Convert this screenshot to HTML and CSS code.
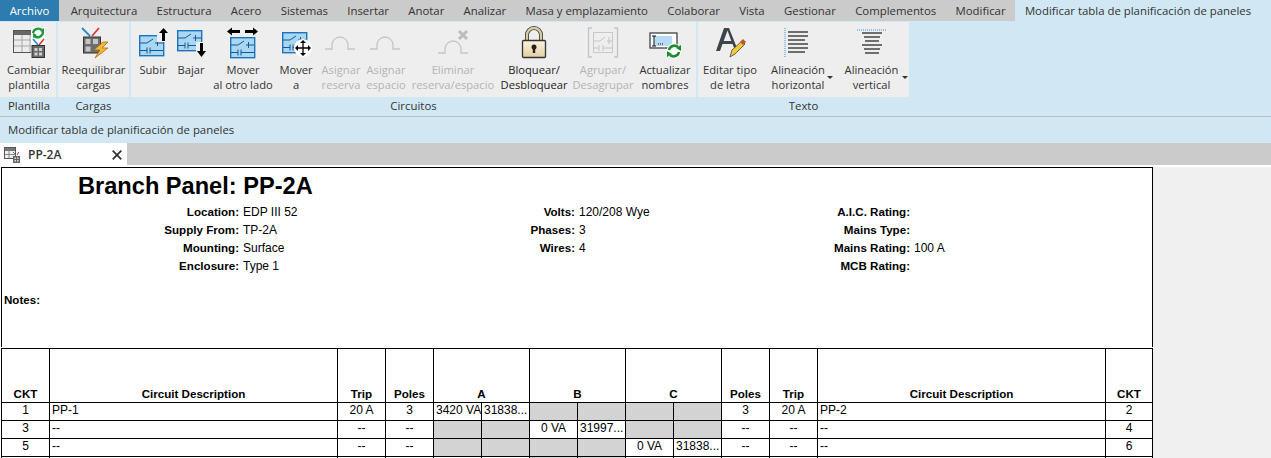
FILE: index.html
```html
<!DOCTYPE html>
<html lang="es">
<head>
<meta charset="utf-8">
<title>Modificar tabla de planificación de paneles</title>
<link rel="stylesheet" href="styles.css">
</head>
<body>
<nav class="tabs">
  <span class="tab file">Archivo</span>
  <span class="tab">Arquitectura</span>
  <span class="tab">Estructura</span>
  <span class="tab">Acero</span>
  <span class="tab">Sistemas</span>
  <span class="tab">Insertar</span>
  <span class="tab">Anotar</span>
  <span class="tab">Analizar</span>
  <span class="tab">Masa y emplazamiento</span>
  <span class="tab">Colaborar</span>
  <span class="tab">Vista</span>
  <span class="tab">Gestionar</span>
  <span class="tab">Complementos</span>
  <span class="tab">Modificar</span>
  <span class="tab active">Modificar tabla de planificación de paneles</span>
</nav>

<svg class="defs" width="0" height="0" aria-hidden="true">
  <defs>
    <linearGradient id="brass" x1="0" y1="0" x2="0" y2="1">
      <stop offset="0" stop-color="#fbf3df"/>
      <stop offset="1" stop-color="#e3cfa2"/>
    </linearGradient>
    <g id="circ">
      <rect x=".7" y=".7" width="24" height="20" fill="#a9d6f3" stroke="#1c75bc" stroke-width="1.400"/>
      <path d="M1 8h7l6-4M16 8h8M18.500 5v6M1 15.500h7M8 12.500v6M11 12.500v6M11 15.500h13" stroke="#14588f" stroke-width="1" fill="none"/>
    </g>
    <g id="sw">
      <path d="M0 22h7v-4a8 8 0 0 1 16 0v4h7" fill="none" stroke="#c6c6c6" stroke-width="1.300"/>
    </g>
  </defs>
</svg>

<section class="ribbon">
  <div class="panel p-plantilla">
    <div class="tools">
      <div class="tool t-54">
        <svg class="icon" viewBox="0 0 32 32"><rect x=".5" y="3.500" width="26" height="22" fill="#ececec" stroke="#555"/><path d="M1 4h25v4H1z" fill="#666"/><path d="M1 13h25M1 19h25M9 8v17M17 8v17" stroke="#a8a8a8"/><path d="M18 0h14v31H18z" fill="#fff"/><path d="M20 6a5.500 5.500 0 0 1 9-3M30 5a5.500 5.500 0 0 1-9 4" fill="none" stroke="#1f9a3a" stroke-width="2.400"/><path d="M27 4l4-3v5zM24 8l-4 3V6z" fill="#1f9a3a"/><path d="M20 12l5 6" stroke="#2a8ac8" stroke-width="1.600"/><path d="M31 12l-5 6" stroke="#d33" stroke-width="1.600"/><rect x="19" y="18.500" width="12.500" height="12" fill="#6a6a6a" stroke="#333"/><path d="M21.500 21h3v3h-3zM26 21h3v3h-3zM21.500 25.500h3v3h-3zM26 25.500h3v3h-3z" fill="#d0d0d0"/></svg>
        <span>Cambiar<br>plantilla</span>
      </div>
    </div>
    <div class="label pad-l">Plantilla</div>
  </div>
  <div class="panel p-cargas">
    <div class="tools">
      <div class="tool t-71">
        <svg class="icon" viewBox="0 0 32 32"><path d="M4 1l8 8" stroke="#2a8ac8" stroke-width="1.800"/><path d="M21 1l-7 8" stroke="#d43c3c" stroke-width="1.800"/><rect x="5.500" y="10" width="17" height="16" fill="#6d6d6d" stroke="#333"/><path d="M7.500 12h5v5h-5zM15 12h5v5h-5zM7.500 19.500h5v5h-5z" fill="#c6c6c6"/><path d="M25 15l-9 8h6l-5 8 13-10h-6l6-6z" fill="#f4b63a" stroke="#a86f10" stroke-width=".8"/></svg>
        <span>Reequilibrar<br>cargas</span>
      </div>
    </div>
    <div class="label">Cargas</div>
  </div>
  <div class="panel p-circuitos">
    <div class="tools">
      <div class="tool t-44">
        <svg class="icon" viewBox="0 0 32 32"><use href="#circ" x="2" y="8"/><path d="M20 0h12v15H20z" fill="#eee"/><path d="M26.500 14V5" stroke="#000" stroke-width="3"/><path d="M22 6l4.500-5L31 6z" fill="#000"/></svg>
        <span>Subir<br>&nbsp;</span>
      </div>
      <div class="tool t-32">
        <svg class="icon" viewBox="0 0 32 32"><use href="#circ" x="2" y="3"/><path d="M21 15h11v16H21z" fill="#eee"/><path d="M26.500 16v9" stroke="#000" stroke-width="3"/><path d="M22 24l4.500 6 4.500-6z" fill="#000"/></svg>
        <span>Bajar<br>&nbsp;</span>
      </div>
      <div class="tool t-72">
        <svg class="icon" viewBox="0 0 32 32"><use href="#circ" x="3" y="10"/><path d="M0 4.500l5-4v8zM31 4.500l-5-4v8z" fill="#000"/><path d="M4 4.500h9M18 4.500h9" stroke="#000" stroke-width="3"/></svg>
        <span>Mover<br>al otro lado</span>
      </div>
      <div class="tool t-34">
        <svg class="icon" viewBox="0 0 32 32"><use href="#circ" x="2" y="5"/><circle cx="23" cy="21" r="9" fill="#fff"/><path d="M17 21h12M23 15v12" stroke="#000" stroke-width="1.300"/><path d="M23 13l-3 3h6zM23 29l-3-3h6zM15 21l3-3v6zM31 21l-3-3v6z" fill="#000"/></svg>
        <span>Mover<br>a</span>
      </div>
      <div class="tool off t-56">
        <svg class="icon" viewBox="0 0 32 32"><use href="#sw"/></svg>
        <span>Asignar<br>reserva</span>
      </div>
      <div class="tool off t-34">
        <svg class="icon" viewBox="0 0 32 32"><use href="#sw"/></svg>
        <span>Asignar<br>espacio</span>
      </div>
      <div class="tool off t-100">
        <svg class="icon" viewBox="0 0 32 32"><use href="#sw" x="1" y="4"/><path d="M22 4l8 8M30 4l-8 8" stroke="#bcbcbc" stroke-width="3"/></svg>
        <span>Eliminar<br>reserva/espacio</span>
      </div>
      <div class="tool lock t-62">
        <svg class="icon" viewBox="0 0 32 32"><path d="M9 14V8a7 7 0 0 1 14 0v6" fill="none" stroke="#333" stroke-width="4"/><path d="M9 14V8a7 7 0 0 1 14 0v6" fill="none" stroke="#d8cda0" stroke-width="2.400"/><rect x="4.500" y="13.500" width="23" height="17" rx="1" fill="url(#brass)" stroke="#333" stroke-width="1.300"/><circle cx="16" cy="20" r="2.500" fill="#222"/><path d="M14.800 20h2.400v6h-2.400z" fill="#222"/></svg>
        <span>Bloquear/<br>Desbloquear</span>
      </div>
      <div class="tool off t-76">
        <svg class="icon" viewBox="0 0 32 32"><path d="M5 1H1.500v29H5M27 1h3.500v29H27" fill="none" stroke="#c4c4c4" stroke-width="1.300"/><rect x="6.500" y="5.500" width="19" height="20" fill="none" stroke="#c8c8c8"/><path d="M6 14h7l5-4M20 14h5M22 10v7M6 21h6M12 18v6M16 18v6M16 21h10" stroke="#c4c4c4" fill="none"/></svg>
        <span>Agrupar/<br>Desagrupar</span>
      </div>
      <div class="tool t-48">
        <svg class="icon" viewBox="0 0 32 32"><rect x="1" y="6" width="27" height="15" fill="#fff" stroke="#333" stroke-width="1.200"/><rect x="5" y="9" width="18" height="10" fill="#b5dbf5"/><path d="M3 9h4M5 9v10M3 19h4" stroke="#111" stroke-width="1"/><path d="M9 17h5" stroke="#111" stroke-dasharray="1 1"/><circle cx="25" cy="24" r="7.500" fill="#fff"/><path d="M20 23a5.500 5.500 0 0 1 9-3M30 25a5.500 5.500 0 0 1-9 3" fill="none" stroke="#1d8a2e" stroke-width="2.600"/><path d="M27 21l5-3v6zM23 27l-5 3v-6z" fill="#1d8a2e"/></svg>
        <span>Actualizar<br>nombres</span>
      </div>
    </div>
    <div class="label">Circuitos</div>
  </div>
  <div class="panel p-texto">
    <div class="tools">
      <div class="tool t-64">
        <svg class="icon" viewBox="0 0 32 32"><path d="M2 24L10 1h5l8 20-2 2-2.500-6H8.500l-2.500 7zM9.700 14h7.600L13.500 3.500z" fill="#3c444c" fill-rule="evenodd"/><path d="M16 30l2-7 10-9 3 3-10 10z" fill="#f4c93c" stroke="#444" stroke-width=".8"/><path d="M26 15l3-3 3 3-3 3z" fill="#b8562a"/></svg>
        <span>Editar tipo<br>de letra</span>
      </div>
      <div class="tool caret t-72">
        <svg class="icon" viewBox="0 0 32 32"><path d="M3 1v29" stroke="#3a8fd0" stroke-dasharray="1 1"/><path d="M6 5h20M6 9h20M6 13h17M6 17h20M6 21h20M6 25h17" stroke="#444" stroke-width="1.300"/></svg>
        <span>Alineación<br>horizontal</span>
      </div>
      <div class="tool caret t-75">
        <svg class="icon" viewBox="0 0 32 32"><path d="M1 3h30" stroke="#3a8fd0" stroke-dasharray="1 1"/><path d="M6 6h20M8 10h16M9 14h14M6 18h20M8 22h16M9 26h14" stroke="#444" stroke-width="1.300"/></svg>
        <span>Alineación<br>vertical</span>
      </div>
    </div>
    <div class="label">Texto</div>
  </div>
</section>

<div class="context">Modificar tabla de planificación de paneles</div>

<div class="docbar">
  <div class="doctab">
    <svg class="docicon" viewBox="0 0 16 16"><rect x=".5" y=".5" width="11" height="11" fill="#eee" stroke="#555"/><path d="M1 1h10v3H1z" fill="#777"/><path d="M1 7.500h10M5 4v7" stroke="#888"/><rect x="9" y="9" width="7" height="7" fill="#666"/><path d="M10.500 10.500h1.500v1.500h-1.500zM13 10.500h1.500v1.500H13zM10.500 13h1.500v1.500h-1.500zM13 13h1.500v1.500H13z" fill="#ddd"/><path d="M9 5l3 3" stroke="#2a8ac8"/><path d="M15 5l-2 3" stroke="#c33"/></svg>
    <b>PP-2A</b>
    <svg class="close" viewBox="0 0 10 10"><path d="M.7.7l8.600 8.600M9.300.7L.7 9.300" stroke="#333" stroke-width="1.800"/></svg>
  </div>
</div>

<main class="canvas">
  <div class="sheet">
    <header class="head">
      <h1>Branch Panel: PP-2A</h1>
      <div class="col c1">
        <div class="kv"><b>Location:</b><span>EDP III 52</span></div>
        <div class="kv"><b>Supply From:</b><span>TP-2A</span></div>
        <div class="kv"><b>Mounting:</b><span>Surface</span></div>
        <div class="kv"><b>Enclosure:</b><span>Type 1</span></div>
      </div>
      <div class="col c2">
        <div class="kv"><b>Volts:</b><span>120/208 Wye</span></div>
        <div class="kv"><b>Phases:</b><span>3</span></div>
        <div class="kv"><b>Wires:</b><span>4</span></div>
      </div>
      <div class="col c3">
        <div class="kv"><b>A.I.C. Rating:</b><span></span></div>
        <div class="kv"><b>Mains Type:</b><span></span></div>
        <div class="kv"><b>Mains Rating:</b><span>100 A</span></div>
        <div class="kv"><b>MCB Rating:</b><span></span></div>
      </div>
      <div class="notes">Notes:</div>
    </header>
    <table class="grid">
      <colgroup>
        <col class="k"><col class="d"><col class="n"><col class="n">
        <col class="v"><col class="v"><col class="v"><col class="v"><col class="v"><col class="v">
        <col class="n"><col class="n"><col class="d"><col class="k-end">
      </colgroup>
      <thead>
        <tr>
          <th>CKT</th><th>Circuit Description</th><th>Trip</th><th>Poles</th>
          <th colspan="2">A</th><th colspan="2">B</th><th colspan="2">C</th>
          <th>Poles</th><th>Trip</th><th>Circuit Description</th><th>CKT</th>
        </tr>
      </thead>
      <tbody>
        <tr>
          <td class="c">1</td><td>PP-1</td><td class="c">20 A</td><td class="c">3</td>
          <td>3420 VA</td><td>31838...</td><td class="g"></td><td class="g"></td><td class="g"></td><td class="g"></td>
          <td class="c">3</td><td class="c">20 A</td><td>PP-2</td><td class="c">2</td>
        </tr>
        <tr>
          <td class="c">3</td><td>--</td><td class="c">--</td><td class="c">--</td>
          <td class="g"></td><td class="g"></td><td class="c">0 VA</td><td>31997...</td><td class="g"></td><td class="g"></td>
          <td class="c">--</td><td class="c">--</td><td>--</td><td class="c">4</td>
        </tr>
        <tr>
          <td class="c">5</td><td>--</td><td class="c">--</td><td class="c">--</td>
          <td class="g"></td><td class="g"></td><td class="g"></td><td class="g"></td><td class="c">0 VA</td><td>31838...</td>
          <td class="c">--</td><td class="c">--</td><td>--</td><td class="c">6</td>
        </tr>
        <tr>
          <td></td><td></td><td></td><td></td>
          <td></td><td></td><td class="g"></td><td class="g"></td><td></td><td></td>
          <td></td><td></td><td></td><td></td>
        </tr>
      </tbody>
    </table>
  </div>
</main>
</body>
</html>
```
FILE: styles.css
```css
* { box-sizing: border-box; }
html, body { margin: 0; height: 458px; overflow: hidden; background: #f0f0f0; }
body { font-family: "Open Sans", "Noto Sans", sans-serif; font-size: 11.4px; color: #333; }
.defs { position: absolute; }

.tabs { display: flex; height: 21px; background: #cbcbcb; line-height: 21px; white-space: nowrap; }
.tab { flex: none; padding: 0 9.65px; }
.tab.file { width: 59px; padding: 0; text-align: center; background: #2d7cb0; color: #fff; margin-right: 2px; }
.tab.active { flex: 1 1 0; min-width: 0; background: #d1e8f4; }

.ribbon { display: flex; height: 95px; padding-top: 1px; gap: 2px; background: #d1e8f4; }
.panel { display: flex; flex-direction: column; }
.p-plantilla { width: 56px; }
.p-cargas { width: 71px; }
.p-circuitos { width: 565px; }
.p-texto { width: 211px; }
.tools { display: flex; height: 75px; background: #eeeeee; }
.p-plantilla .tools { padding-left: 2px; }
.label { height: 18px; line-height: 17px; text-align: center; }
.label.pad-l { padding-left: 2px; }
.tool { display: flex; flex-direction: column; align-items: center; flex: none; padding-top: 5px; font-size: 11.2px; line-height: 15px; text-align: center; white-space: nowrap; position: relative; }
.icon { width: 32px; height: 32px; display: block; margin-bottom: 3px; overflow: visible; }
.tool.off { color: #b4b4b4; }
.tool.lock { color: #222; }
.tool.caret::after { content: ""; position: absolute; right: 1px; top: 54px; border: 3px solid transparent; border-top-color: #333; }
.t-32 { width: 32px; }
.t-34 { width: 34px; }
.t-44 { width: 44px; }
.t-48 { width: 48px; }
.t-54 { width: 54px; }
.t-56 { width: 56px; }
.t-62 { width: 62px; }
.t-64 { width: 64px; }
.t-71 { width: 71px; }
.t-72 { width: 72px; }
.t-75 { width: 75px; }
.t-76 { width: 76px; }
.t-100 { width: 100px; }

.context { height: 27px; border-top: 1px solid #bdbdbd; background: #d1e8f4; line-height: 26px; padding-left: 8px; }
.docbar { height: 22px; background: #cbcbcb; }
.doctab { display: flex; align-items: center; width: 127px; height: 22px; padding: 1px 5px 0 4px; background: #fff; }
.doctab b { flex: 1; margin-left: 8px; font-size: 12px; font-weight: 600; }
.docicon { width: 16px; height: 16px; }
.close { width: 10px; height: 10px; }

.canvas { height: 293px; border-top: 2px solid #fff; background: #f0f0f0; }
.sheet { width: 1153px; height: 291px; padding-left: 1px; background: #fff; font-family: "Liberation Sans", Arial, sans-serif; font-size: 12px; color: #000; }
.head { position: relative; width: 1152px; height: 180px; border: 1px solid #000; border-bottom: 0; }
h1 { margin: 0; position: absolute; left: 76px; top: 4px; font-size: 23.6px; line-height: 28px; font-weight: bold; }
.col { position: absolute; top: 35px; left: 0; }
.kv { display: grid; height: 18px; line-height: 18px; column-gap: 4px; }
.c1 .kv { grid-template-columns: 237px auto; }
.c2 .kv { grid-template-columns: 573px auto; }
.c3 .kv { grid-template-columns: 908px auto; }
.kv b { text-align: right; font-size: 11.6px; }
.notes { position: absolute; left: 2px; top: 125px; font-weight: bold; font-size: 11.6px; }

.grid { margin-top: 1px; table-layout: fixed; width: 1152px; border-collapse: collapse; border: 1px solid #000; }
.k { width: 48px; }
.k-end { width: 47px; }
.d { width: 288px; }
.n, .v { width: 48px; }
th, td { border: 1px solid #000; padding: 0 2px; overflow: hidden; white-space: nowrap; }
th { height: 54px; vertical-align: bottom; line-height: 16px; font-size: 11.6px; font-weight: bold; text-align: center; }
td { height: 18px; padding-bottom: 2px; line-height: 15px; }
td.c { text-align: center; }
td.g { background: #d3d3d3; }
```
